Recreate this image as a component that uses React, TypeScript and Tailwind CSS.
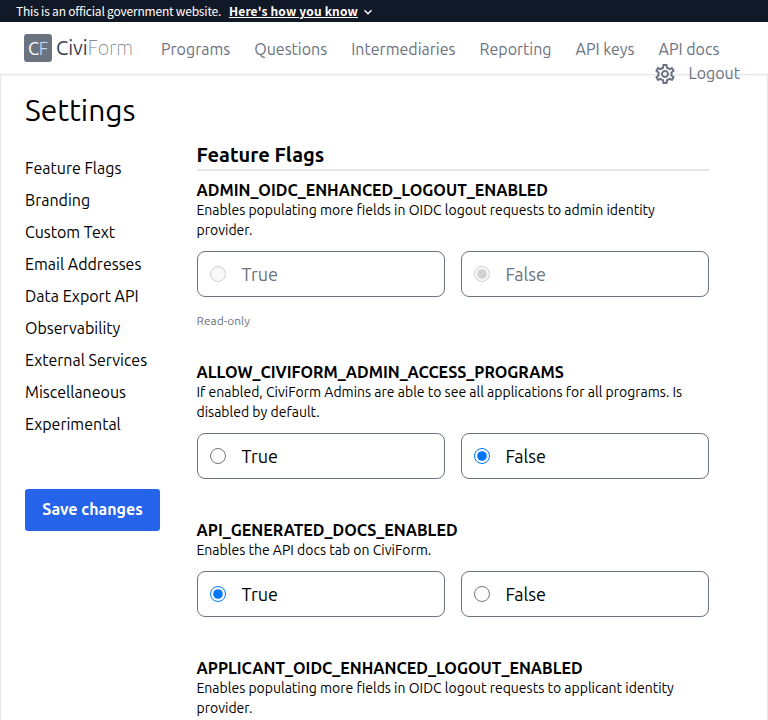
import { MdOutlineSettings } from "react-icons/md";

const navLinks = [
  { label: "Programs", className: "w-[69.25px]" },
  { label: "Questions", className: "w-[73px]" },
  { label: "Intermediaries", className: "w-[104.25px]" },
  { label: "Reporting", className: "w-[72px]" },
  { label: "API keys", className: "w-[59px]" },
  { label: "API docs", className: "w-[61px]" },
];

const sections = [
  "Feature Flags",
  "Branding",
  "Custom Text",
  "Email Addresses",
  "Data Export API",
  "Observability",
  "External Services",
  "Miscellaneous",
  "Experimental",
];

type Flag = {
  name: string;
  lines: string[];
  value?: boolean;
  readOnly?: boolean;
};

const flags: Flag[] = [
  {
    name: "ADMIN_OIDC_ENHANCED_LOGOUT_ENABLED",
    lines: ["Enables populating more fields in OIDC logout requests to admin identity", "provider."],
    value: false,
    readOnly: true,
  },
  {
    name: "ALLOW_CIVIFORM_ADMIN_ACCESS_PROGRAMS",
    lines: ["If enabled, CiviForm Admins are able to see all applications for all programs. Is", "disabled by default."],
    value: false,
  },
  {
    name: "API_GENERATED_DOCS_ENABLED",
    lines: ["Enables the API docs tab on CiviForm."],
    value: true,
  },
];

const lastFlag: Flag = {
  name: "APPLICANT_OIDC_ENHANCED_LOGOUT_ENABLED",
  lines: ["Enables populating more fields in OIDC logout requests to applicant identity", "provider."],
};

function Option({ flag, option }: { flag: Flag; option: boolean }) {
  return (
    <label
      className={`flex h-[46px] w-[248px] items-center rounded-lg border border-[#6b7280] pl-3 text-lg ${
        flag.readOnly ? "text-[#6b7280]" : "text-black"
      }`}
    >
      <input
        type="radio"
        name={flag.name}
        defaultChecked={flag.value === option}
        disabled={flag.readOnly}
        className="mr-4 h-4 w-4"
      />
      <span className="-mt-px">{option ? "True" : "False"}</span>
    </label>
  );
}

function FlagText({ flag }: { flag: Flag }) {
  return (
    <>
      <h3 className="h-6 text-base font-semibold whitespace-nowrap">{flag.name}</h3>
      <div className="-mt-0.5 text-sm">
        {flag.lines.map((line) => (
          <p key={line} className="whitespace-nowrap">
            {line}
          </p>
        ))}
      </div>
    </>
  );
}

function FlagSetting({ flag }: { flag: Flag }) {
  return (
    <div className="mb-[39px]">
      <FlagText flag={flag} />
      <div className="mt-[11px] flex gap-4">
        <Option flag={flag} option={true} />
        <Option flag={flag} option={false} />
      </div>
      {flag.readOnly && <p className="mt-4 h-2 text-xs text-[#6b7280]">Read-only</p>}
    </div>
  );
}

export default function App() {
  return (
    <div className="flex h-[720px] w-[768px] flex-col overflow-hidden bg-white font-['Ubuntu','Noto_Sans',sans-serif] text-black">
      <div className="flex h-[22px] shrink-0 items-center bg-[#111827] pl-4 font-['Source_Sans_Pro','Noto_Sans_CJK_SC',sans-serif] text-[12px] whitespace-nowrap text-white">
        <span className="w-[213px] tracking-[-0.2px]">This is an official government website.</span>
        <span className="font-bold tracking-[0.16px] underline">Here's how you know</span>
        <svg className="mt-px ml-[5px]" width="10" height="8" viewBox="0 0 10 8" fill="none" stroke="currentColor" strokeWidth="1.4">
          <path d="M1.5 2.2 5 5.7 8.5 2.2" />
        </svg>
      </div>

      <header className="z-10 flex h-[53px] shrink-0 flex-col border-b border-[#e5e7eb] bg-white pt-3 text-[#6b7280] shadow-xs">
        <nav className="flex h-7 shrink-0 items-center pl-6 text-base">
          <div className="flex h-7 w-7 items-center justify-center rounded-[3px] bg-[#6b7280] text-lg leading-7 tracking-[-0.3px] text-white">
            C<span className="font-light text-blue-200">F</span>
          </div>
          <div className="ml-1 w-[105px] text-xl leading-7 whitespace-nowrap text-[#374151]">
            Civi<span className="font-thin text-[#6b7280]">Form</span>
          </div>
          <div className="flex gap-6">
            {navLinks.map((link) => (
              <a key={link.label} className={`mt-[2px] whitespace-nowrap ${link.className}`}>
                {link.label}
              </a>
            ))}
          </div>
        </nav>
        <div className="flex h-6 shrink-0 items-center justify-end pr-7 text-base">
          <MdOutlineSettings size={24} />
          <a className="-mt-[2px] ml-[11.5px] w-[51.5px] whitespace-nowrap">Logout</a>
        </div>
      </header>

      <main className="flex min-h-0 flex-1 flex-col overflow-hidden border-x border-[#e5e7eb] px-6">
        <h1 className="mt-4 h-10 shrink-0 text-3xl leading-[38px]">Settings</h1>
        <div className="flex">
          <aside className="w-[171.5px] shrink-0 pt-[21px]">
            <ul>
              {sections.map((section) => (
                <li key={section} className="h-8 text-base leading-8 whitespace-nowrap">
                  {section}
                </li>
              ))}
            </ul>
            <button className="mt-[49px] h-[42px] w-[135px] rounded-[3px] bg-[#2563eb] pb-0.5 text-base font-semibold whitespace-nowrap text-white">
              Save changes
            </button>
          </aside>
          <section className="w-[512px] shrink-0 pt-[9px]">
            <h2 className="mb-[7px] h-[31px] border-b-2 border-[#e5e7eb] text-xl leading-[30px] font-semibold">Feature Flags</h2>
            {flags.map((flag) => (
              <FlagSetting key={flag.name} flag={flag} />
            ))}
            <FlagText flag={lastFlag} />
          </section>
        </div>
      </main>
    </div>
  );
}
